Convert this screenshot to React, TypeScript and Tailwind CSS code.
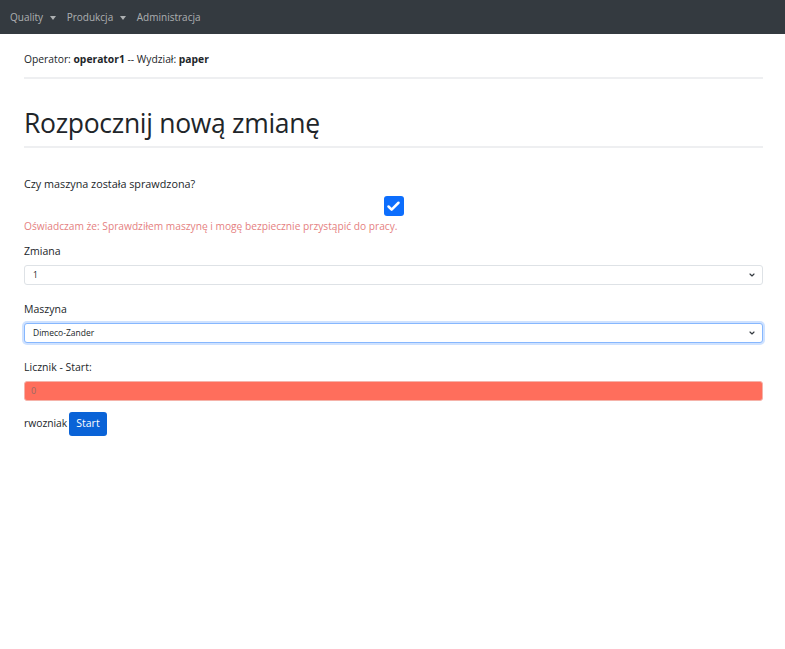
import { Check, ChevronDown } from "lucide-react";

const font = { fontFamily: '"Open Sans", "Noto Sans", sans-serif' };

function Caret() {
  return <span className="ml-[4px] inline-block border-x-[3.5px] border-t-[4px] border-x-transparent border-t-current align-middle" />;
}

function SelectBox({ value, focused = false }: { value: string; focused?: boolean }) {
  return (
    <div
      className={
        "flex h-[20px] items-center justify-between rounded-[3px] border bg-white pl-[8px] pr-[6px] text-[8.5px] text-[#212529] " +
        (focused ? "border-[#86b7fe] shadow-[0_0_0_2px_rgba(13,110,253,0.2)]" : "border-[#dee2e6]")
      }
    >
      <span>{value}</span>
      <ChevronDown size={8} strokeWidth={3.5} className="text-[#343a40]" />
    </div>
  );
}

export default function App() {
  return (
    <div className="min-h-screen w-full bg-white text-[#212529]" style={font}>
      {/* navbar */}
      <nav className="flex h-[34px] items-center gap-[11px] bg-[#343a40] pl-[10px] text-[10px] text-[rgba(255,255,255,0.6)]">
        <span>
          Quality <Caret />
        </span>
        <span>
          Produkcja <Caret />
        </span>
        <span>Administracja</span>
      </nav>

      <div className="px-[24px] pr-[22px]">
        <div className="mt-[17px] h-[16px] text-[10.3px] leading-[16px]">
          Operator: <b>operator1</b> -- Wydział: <b>paper</b>
        </div>
        <hr className="mt-[10px] border-t-[2px] border-[#eeeff1]" />

        <h1 className="mt-[27px] h-[34px] text-[26.5px] font-medium leading-[34px] tracking-[-0.3px]">Rozpocznij nową zmianę</h1>
        <hr className="mt-[6px] border-t-[2px] border-[#eeeff1]" />

        <div className="mt-[28px] h-[16px] text-[10.8px] leading-[16px]">Czy maszyna została sprawdzona?</div>
        <div className="mt-[4px] flex justify-center">
          <div className="flex h-[20px] w-[20px] items-center justify-center rounded-[3px] bg-[#0d6efd]">
            <Check size={15} strokeWidth={4} className="text-white" />
          </div>
        </div>
        <div className="mt-[2px] h-[16px] text-[10.2px] leading-[16px] text-[#e57f7f]">
          Oświadczam że: Sprawdziłem maszynę i mogę bezpiecznie przystąpić do pracy.
        </div>

        <div className="mt-[9px] h-[16px] text-[10.5px] leading-[16px]">Zmiana</div>
        <div className="mt-[6px]">
          <SelectBox value="1" />
        </div>

        <div className="mt-[16px] h-[16px] text-[10.5px] leading-[16px]">Maszyna</div>
        <div className="mt-[6px]">
          <SelectBox value="Dimeco-Zander" focused />
        </div>

        <div className="mt-[16px] h-[16px] text-[10.5px] leading-[16px]">Licznik - Start:</div>
        <div className="mt-[6px] flex h-[20px] items-center rounded-[3px] border border-[#f5b3aa] bg-[#ff6e5c] pl-[6px] text-[9px] text-[#9a6a64]">
          0
        </div>

        <div className="mt-[11px] flex items-center gap-[2px] text-[10.3px]">
          <span>rwozniak</span>
          <button className="h-[24px] rounded-[3px] bg-[#0a63d7] px-[7px] text-[10.5px] text-white">Start</button>
        </div>
      </div>
    </div>
  );
}
